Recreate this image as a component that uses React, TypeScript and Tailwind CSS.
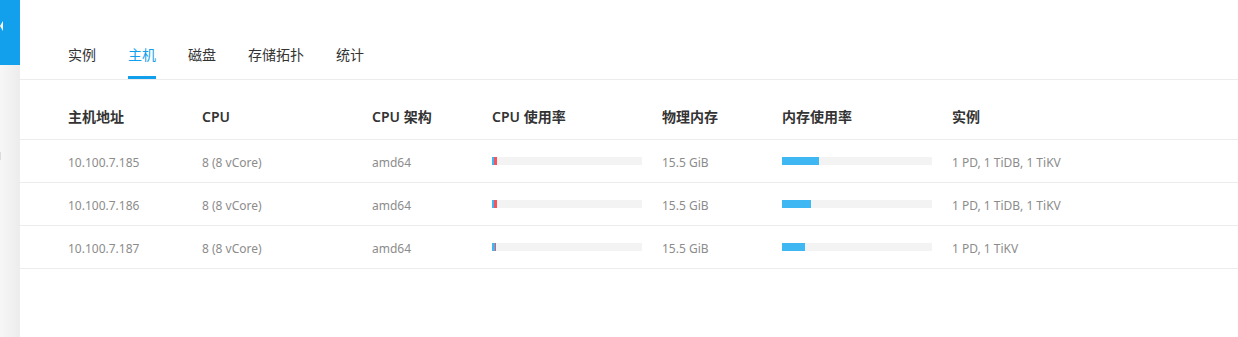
import React from "react";

const font = { fontFamily: '"Noto Sans", "Noto Sans CJK SC", sans-serif' };

const rows = [
  { host: "10.100.7.185", cpu: "8 (8 vCore)", arch: "amd64", cpuU: 2, cpuS: 3, mem: "15.5 GiB", memU: 37, inst: "1 PD, 1 TiDB, 1 TiKV" },
  { host: "10.100.7.186", cpu: "8 (8 vCore)", arch: "amd64", cpuU: 2, cpuS: 3, mem: "15.5 GiB", memU: 29, inst: "1 PD, 1 TiDB, 1 TiKV" },
  { host: "10.100.7.187", cpu: "8 (8 vCore)", arch: "amd64", cpuU: 3, cpuS: 1, mem: "15.5 GiB", memU: 23, inst: "1 PD, 1 TiKV" },
];

const tabs = ["实例", "主机", "磁盘", "存储拓扑", "统计"];

function Row({ children, header }: { children: React.ReactNode; header?: boolean }) {
  return (
    <div
      className={`grid grid-cols-[134px_170px_120px_170px_120px_170px_1fr] pl-12 border-b border-[#ececec] ${
        header
          ? "h-[60px] items-end pb-[12px] text-[14px] leading-[20px] font-semibold text-[#333]"
          : "h-[43px] items-center pt-[3px] text-[12px] text-[#8c8c8c]"
      }`}
    >
      {children}
    </div>
  );
}

function Bar({ parts }: { parts: { w: number; c: string }[] }) {
  return (
    <div className="w-[150px] h-[8px] -mt-[3px] bg-[#f3f3f3] flex">
      {parts.map((p, i) => (
        <div
          key={i}
          className={`h-full ${p.c === "blue" ? "bg-[#3fb7f3]" : "bg-[#f5535d]"}`}
          style={{ width: p.w }}
        />
      ))}
    </div>
  );
}

export default function App() {
  return (
    <div className="flex w-[1238px] h-[337px] bg-white overflow-hidden" style={font}>
      <div className="w-[20px] shrink-0 flex flex-col bg-gradient-to-r from-[#f7f7f7] to-[#ececec]">
        <div className="h-[65px] bg-[#12a0ec] relative">
          <div className="absolute left-0 top-[21px] w-0 h-0 border-y-[5px] border-y-transparent border-r-[3px] border-r-white" />
        </div>
        <div className="relative flex-1">
          <div className="absolute left-0 top-[87px] w-[1px] h-[8px] bg-[#dcdcdc]" />
        </div>
      </div>
      <div className="flex-1 flex flex-col">
        <div className="h-[80px] flex items-end gap-8 pl-12 border-b border-[#ececec] text-[14px] leading-[20px] text-[#333]">
          {tabs.map((t, i) => (
            <div
              key={t}
              className={`pb-[11px] border-b-[3px] ${
                i === 1 ? "border-[#12a0ec] text-[#12a0ec]" : "border-transparent"
              }`}
            >
              {t}
            </div>
          ))}
        </div>
        <Row header>
          <div>主机地址</div>
          <div>CPU</div>
          <div>CPU 架构</div>
          <div>CPU 使用率</div>
          <div>物理内存</div>
          <div>内存使用率</div>
          <div>实例</div>
        </Row>
        {rows.map((r) => (
          <Row key={r.host}>
            <div>{r.host}</div>
            <div>{r.cpu}</div>
            <div>{r.arch}</div>
            <Bar parts={[{ w: r.cpuU, c: "blue" }, { w: r.cpuS, c: "red" }]} />
            <div>{r.mem}</div>
            <Bar parts={[{ w: r.memU, c: "blue" }]} />
            <div>{r.inst}</div>
          </Row>
        ))}
      </div>
    </div>
  );
}
